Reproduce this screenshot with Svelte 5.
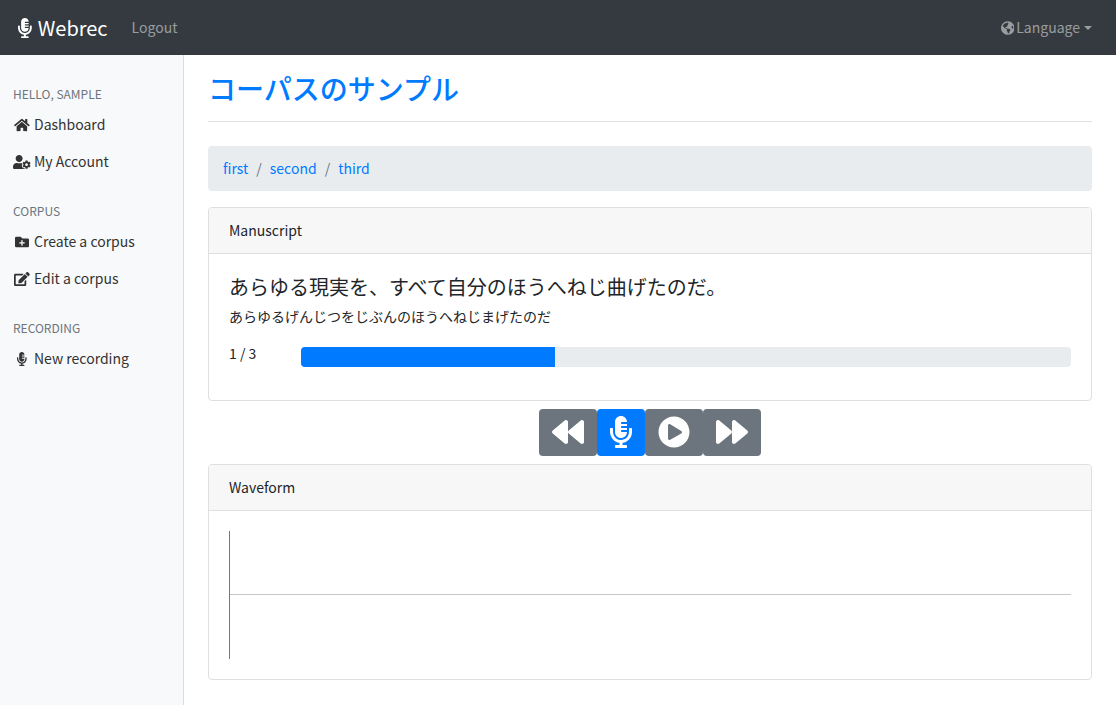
<script>
  const icons = {
    mic: { w: 352, d: 'M336 192h-16c-8.84 0-16 7.16-16 16v48c0 74.8-64.49 134.82-140.79 127.38C96.71 376.89 48 317.11 48 250.3V208c0-8.84-7.16-16-16-16H16c-8.84 0-16 7.16-16 16v40.16c0 89.64 63.97 169.55 152 181.69V464H96c-8.84 0-16 7.16-16 16v16c0 8.84 7.16 16 16 16h160c8.84 0 16-7.16 16-16v-16c0-8.84-7.16-16-16-16h-56v-33.77C285.71 418.47 352 344.9 352 256v-48c0-8.84-7.16-16-16-16zM176 352c53.02 0 96-42.98 96-96h-85.33c-5.89 0-10.67-3.58-10.67-8v-16c0-4.42 4.78-8 10.67-8H272v-32h-85.33c-5.89 0-10.67-3.58-10.67-8v-16c0-4.42 4.78-8 10.67-8H272v-32h-85.33c-5.89 0-10.67-3.58-10.67-8v-16c0-4.42 4.78-8 10.67-8H272c0-53.02-42.98-96-96-96S80 42.98 80 96v160c0 53.02 42.98 96 96 96z' },
    home: { w: 576, d: 'M280.37 148.26L96 300.11V464a16 16 0 0 0 16 16l112.06-.29a16 16 0 0 0 15.92-16V368a16 16 0 0 1 16-16h64a16 16 0 0 1 16 16v95.64a16 16 0 0 0 16 16.05L464 480a16 16 0 0 0 16-16V300L295.67 148.26a12.19 12.19 0 0 0-15.3 0zM571.6 251.47L488 182.56V44.05a12 12 0 0 0-12-12h-56a12 12 0 0 0-12 12v72.61L318.47 43a48 48 0 0 0-61 0L4.34 251.47a12 12 0 0 0-1.6 16.9l25.5 31A12 12 0 0 0 45.15 301l235.22-193.74a12.19 12.19 0 0 1 15.3 0L530.9 301a12 12 0 0 0 16.9-1.6l25.5-31a12 12 0 0 0-1.7-16.93z' },
    userCog: { w: 640, d: 'M610.5 373.3c2.6-14.1 2.6-28.5 0-42.6l25.8-14.9c3-1.7 4.3-5.2 3.3-8.5-6.7-21.6-18.2-41.2-33.2-57.4-2.3-2.5-6-3.1-9-1.4l-25.8 14.9c-10.9-9.3-23.4-16.5-36.9-21.3v-29.8c0-3.4-2.4-6.4-5.7-7.1-22.3-5-45-4.8-66.2 0-3.3.7-5.7 3.7-5.7 7.1v29.8c-13.5 4.8-26 12-36.9 21.3l-25.8-14.9c-2.9-1.7-6.7-1.1-9 1.4-15 16.2-26.5 35.8-33.2 57.4-1 3.3.4 6.8 3.3 8.5l25.8 14.9c-2.6 14.1-2.6 28.5 0 42.6l-25.8 14.9c-3 1.7-4.3 5.2-3.3 8.5 6.7 21.6 18.2 41.1 33.2 57.4 2.3 2.5 6 3.1 9 1.4l25.8-14.9c10.9 9.3 23.4 16.5 36.9 21.3v29.8c0 3.4 2.4 6.4 5.7 7.1 22.3 5 45 4.8 66.2 0 3.3-.7 5.7-3.7 5.7-7.1v-29.8c13.5-4.8 26-12 36.9-21.3l25.8 14.9c2.9 1.7 6.7 1.1 9-1.4 15-16.2 26.5-35.8 33.2-57.4 1-3.3-.4-6.8-3.3-8.5l-25.8-14.9zM496 400.5c-26.8 0-48.5-21.8-48.5-48.5s21.8-48.5 48.5-48.5 48.5 21.8 48.5 48.5-21.7 48.5-48.5 48.5zM224 256c70.7 0 128-57.3 128-128S294.7 0 224 0 96 57.3 96 128s57.3 128 128 128zm201.2 226.5c-2.3-1.2-4.6-2.6-6.8-3.9l-7.9 4.6c-6 3.4-12.8 5.3-19.6 5.3-10.9 0-21.4-4.6-28.9-12.6-18.3-19.8-32.3-43.9-40.2-69.6-5.5-17.7 1.9-36.4 17.9-45.7l7.9-4.6c-.1-2.6-.1-5.2 0-7.8l-7.9-4.6c-16-9.2-23.4-28-17.9-45.7.9-2.9 2.2-5.8 3.2-8.7-3.8-.3-7.5-1.2-11.4-1.2h-16.7c-22.2 10.2-46.9 16-72.9 16s-50.6-5.8-72.9-16h-16.7C60.2 288 0 348.2 0 422.4V464c0 26.5 21.5 48 48 48h352c10.1 0 19.5-3.2 27.2-8.5-1.2-3.8-2-7.7-2-11.8v-9.2z' },
    folderPlus: { w: 512, d: 'M464,128H272L208,64H48A48,48,0,0,0,0,112V400a48,48,0,0,0,48,48H464a48,48,0,0,0,48-48V176A48,48,0,0,0,464,128ZM359.5,296a16,16,0,0,1-16,16h-64v64a16,16,0,0,1-16,16h-16a16,16,0,0,1-16-16V312h-64a16,16,0,0,1-16-16V280a16,16,0,0,1,16-16h64V200a16,16,0,0,1,16-16h16a16,16,0,0,1,16,16v64h64a16,16,0,0,1,16,16Z' },
    edit: { w: 576, d: 'M402.6 83.2l90.2 90.2c3.8 3.8 3.8 10 0 13.8L274.4 405.6l-92.8 10.3c-12.4 1.4-22.9-9.1-21.5-21.5l10.3-92.8L388.8 83.2c3.8-3.8 10-3.8 13.8 0zm162-22.9l-48.8-48.8c-15.2-15.2-39.9-15.2-55.2 0l-35.4 35.4c-3.8 3.8-3.8 10 0 13.8l90.2 90.2c3.8 3.8 10 3.8 13.8 0l35.4-35.4c15.2-15.3 15.2-40 0-55.2zM384 346.2V448H64V128h229.8c3.2 0 6.2-1.3 8.5-3.5l40-40c7.6-7.6 2.2-20.5-8.5-20.5H48C21.5 64 0 85.5 0 112v352c0 26.5 21.5 48 48 48h352c26.5 0 48-21.5 48-48V306.2c0-10.7-12.9-16-20.5-8.5l-40 40c-2.2 2.3-3.5 5.3-3.5 8.5z' },
    globe: { w: 496, d: 'M248 8C111.03 8 0 119.03 0 256s111.03 248 248 248 248-111.03 248-248S384.97 8 248 8zm82.29 357.6c-3.9 3.88-7.99 7.95-11.31 11.28-2.99 3-5.1 6.7-6.17 10.71-1.51 5.66-2.73 11.38-4.77 16.87l-17.39 46.85c-13.76 3-28 4.69-42.65 4.69v-27.38c1.69-12.62-7.64-36.26-22.63-51.25-6-6-9.37-14.14-9.37-22.63v-32.01c0-11.64-6.27-22.34-16.46-27.97-14.37-7.95-34.81-19.06-48.81-26.11-11.48-5.78-22.1-13.14-31.65-21.75l-.8-.72a114.792 114.792 0 0 1-18.06-20.74c-9.38-13.77-24.66-36.42-34.59-51.14 20.47-45.5 57.36-82.04 103.2-101.89l24.01 12.01C203.48 89.74 216 82.01 216 70.11v-11.3c7.99-1.29 16.12-2.11 24.39-2.42l28.3 28.3c6.25 6.25 6.25 16.38 0 22.63L264 112l-10.34 10.34c-3.12 3.12-3.12 8.19 0 11.31l4.69 4.69c3.12 3.12 3.12 8.19 0 11.31l-8 8a8.008 8.008 0 0 1-5.66 2.34h-8.99c-2.08 0-4.08.81-5.58 2.27l-9.92 9.65a8.008 8.008 0 0 0-1.58 9.31l15.59 31.19c2.66 5.32-1.21 11.58-7.15 11.58h-5.64c-1.93 0-3.79-.7-5.24-1.96l-9.28-8.06a16.017 16.017 0 0 0-15.55-3.1l-31.17 10.39a11.95 11.95 0 0 0-8.17 11.34c0 4.53 2.56 8.66 6.61 10.69l11.08 5.54c9.41 4.71 19.79 7.16 30.31 7.16s22.59 27.29 32 32h66.75c8.49 0 16.62 3.37 22.63 9.37l13.69 13.69a30.503 30.503 0 0 1 8.93 21.57 46.536 46.536 0 0 1-13.72 32.98zM417 274.25c-5.79-1.45-10.84-5-14.15-9.97l-17.98-26.97a23.97 23.97 0 0 1 0-26.62l19.59-29.38c2.32-3.47 5.5-6.29 9.24-8.15l12.98-6.49C440.2 193.59 448 223.87 448 256c0 8.67-.74 17.16-1.82 25.54L417 274.25z' },
    backward: { w: 512, d: 'M11.5 280.6l192 160c20.6 17.2 52.5 2.8 52.5-24.6V96c0-27.4-31.9-41.8-52.5-24.6l-192 160c-15.3 12.8-15.3 36.4 0 49.2zm256 0l192 160c20.6 17.2 52.5 2.8 52.5-24.6V96c0-27.4-31.9-41.8-52.5-24.6l-192 160c-15.3 12.8-15.3 36.4 0 49.2z' },
    forward: { w: 512, d: 'M500.5 231.4l-192-160C287.9 54.3 256 68.6 256 96v320c0 27.4 31.9 41.8 52.5 24.6l192-160c15.3-12.8 15.3-36.4 0-49.2zm-256 0l-192-160C31.9 54.3 0 68.6 0 96v320c0 27.4 31.9 41.8 52.5 24.6l192-160c15.3-12.8 15.3-36.4 0-49.2z' },
    play: { w: 512, d: 'M256 8C119 8 8 119 8 256s111 248 248 248 248-111 248-248S393 8 256 8zm115.7 272l-176 101c-15.8 8.8-35.7-2.5-35.7-21V152c0-18.4 19.8-29.8 35.7-21l176 107c16.4 9.2 16.4 32.9 0 42z' }
  };

  const menu = [
    { title: 'Hello, sample', items: [['home', 'Dashboard'], ['userCog', 'My Account']] },
    { title: 'Corpus', items: [['folderPlus', 'Create a corpus'], ['edit', 'Edit a corpus']] },
    { title: 'Recording', items: [['mic', 'New recording']] }
  ];
  const crumbs = ['first', 'second', 'third'];
  const controls = [
    ['backward', 'Previous'],
    ['mic', 'Record'],
    ['play', 'Play'],
    ['forward', 'Next']
  ];
  let progress = $state(33);
</script>

{#snippet icon(name)}
  <svg class="icon" viewBox="0 0 {icons[name].w} 512" aria-hidden="true"><path fill="currentColor" d={icons[name].d} /></svg>
{/snippet}

<header class="navbar">
  <a class="brand" href="#home">{@render icon('mic')}<span>Webrec</span></a>
  <a class="nav-link" href="#logout">Logout</a>
  <button class="nav-link language" type="button">{@render icon('globe')}<span>Language</span><span class="caret"></span></button>
</header>

<div class="layout">
  <nav class="sidebar">
    {#each menu as group}
      <h6>{group.title}</h6>
      <ul>
        {#each group.items as [name, label]}
          <li><a href="#{name}"><span class="fixed">{@render icon(name)}</span>{label}</a></li>
        {/each}
      </ul>
    {/each}
  </nav>

  <main>
    <h1><a href="#corpus">コーパスのサンプル</a></h1>

    <ol class="breadcrumb">
      {#each crumbs as crumb}
        <li><a href="#{crumb}">{crumb}</a></li>
      {/each}
    </ol>

    <section class="card">
      <div class="card-header">Manuscript</div>
      <div class="card-body">
        <h4>あらゆる現実を、すべて自分のほうへねじ曲げたのだ。</h4>
        <p>あらゆるげんじつをじぶんのほうへねじまげたのだ</p>
        <div class="status">
          <span class="count">1 / 3</span>
          <div class="progress" role="progressbar" aria-valuenow={progress} aria-valuemin="0" aria-valuemax="100" aria-label="1 / 3">
            <div class="bar" style="width: {progress}%"></div>
          </div>
        </div>
      </div>
    </section>

    <div class="controls">
      {#each controls as [name, label]}
        <button type="button" class:primary={name === 'mic'} aria-label={label}>{@render icon(name)}</button>
      {/each}
    </div>

    <section class="card">
      <div class="card-header">Waveform</div>
      <div class="card-body">
        <div class="wave"><div class="axis"></div></div>
      </div>
    </section>
  </main>
</div>

<style>
  :global(body) {
    margin: 0;
    background: #fff;
  }
  :global(#app) {
    display: flex;
    flex-direction: column;
    min-height: 100vh;
    color: #212529;
    font: 400 14px/21px 'Noto Sans CJK JP', sans-serif;
  }
  a {
    color: #007bff;
    text-decoration: none;
  }
  button {
    border: 0;
    font: inherit;
    cursor: pointer;
  }
  .icon {
    display: block;
    height: 1em;
  }
  .navbar {
    display: flex;
    align-items: center;
    padding: 8px 24px 8px 18px;
    background: #343a40;
  }
  .brand {
    display: flex;
    align-items: center;
    gap: 6px;
    margin-right: 24px;
    color: #fff;
    font-size: 20px;
    line-height: 39px;
  }
  .nav-link {
    color: rgba(255, 255, 255, 0.5);
  }
  .language {
    display: flex;
    align-items: center;
    gap: 2px;
    margin-left: auto;
    padding: 0;
    background: none;
  }
  .caret {
    margin-left: 2px;
    border: 4px solid transparent;
    border-top-color: currentColor;
    border-bottom: 0;
  }
  .layout {
    display: flex;
    flex: 1;
  }
  .sidebar {
    box-sizing: border-box;
    flex: 0 0 184px;
    padding: 8px 13px;
    border-right: 1px solid #dcdddf;
    background: #f8f9fa;
  }
  h6 {
    margin: 22px 0 3px;
    color: #6c757d;
    font-size: 12px;
    font-weight: 400;
    line-height: 18px;
    text-transform: uppercase;
  }
  ul,
  ol {
    margin: 0;
    padding: 0;
    list-style: none;
  }
  .sidebar a {
    display: flex;
    align-items: center;
    gap: 3px;
    padding: 8px 0;
    color: #333;
  }
  .fixed {
    display: flex;
    justify-content: center;
    width: 18px;
  }
  main {
    flex: 1;
    min-width: 0;
    padding: 16px 24px 24px;
  }
  h1 {
    margin: 0 0 24px;
    padding-bottom: 16px;
    border-bottom: 1px solid #dee2e6;
    font-size: 28px;
    font-weight: 500;
    line-height: 34px;
  }
  .breadcrumb {
    display: flex;
    margin-bottom: 16px;
    padding: 12px 15px;
    border-radius: 4px;
    background: #e9ecef;
  }
  .breadcrumb li + li::before {
    content: '/';
    padding: 0 8px;
    color: #6c757d;
  }
  .card {
    border: 1px solid #dfdfdf;
    border-radius: 4px;
    overflow: hidden;
  }
  .card-header {
    padding: 12px 20px;
    border-bottom: 1px solid #dfdfdf;
    background: #f7f7f7;
  }
  .card-body {
    padding: 20px;
  }
  h4 {
    margin: 0 0 6px;
    font-size: 20px;
    font-weight: 400;
    line-height: 26px;
  }
  p {
    margin: 0 0 16px;
  }
  .status {
    display: flex;
    align-items: flex-start;
    margin-bottom: 13px;
  }
  .count {
    flex: 0 0 72px;
  }
  .progress {
    flex: 1;
    height: 20px;
    margin-top: 4px;
    border-radius: 4px;
    background: #e9ecef;
    overflow: hidden;
  }
  .bar {
    height: 100%;
    background: #007bff;
  }
  .controls {
    display: flex;
    justify-content: center;
    margin: 8px 0;
  }
  .controls button {
    padding: 7px 13px 8px;
    border-radius: 4px;
    background: #6c757d;
    color: #fff;
    font-size: 32px;
    line-height: 1;
  }
  .controls .primary {
    background: #007bff;
  }
  .wave {
    display: flex;
    align-items: center;
    height: 128px;
    border-left: 1px solid #d9437f;
  }
  .axis {
    flex: 1;
    height: 1px;
    margin-bottom: 1px;
    background: #c8c8c8;
  }
</style>
